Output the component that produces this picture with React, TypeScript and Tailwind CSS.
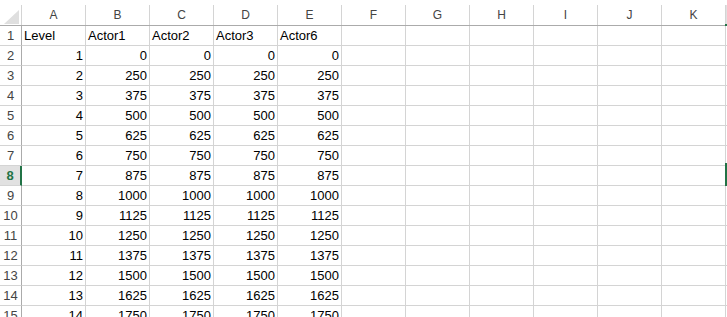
const COLS = ["A", "B", "C", "D", "E", "F", "G", "H", "I", "J", "K"];
const ACTIVE_ROW = 8;

type Cell = { text: string; num?: boolean };

function buildRows(): Cell[][] {
  const rows: Cell[][] = [
    [{ text: "Level" }, { text: "Actor1" }, { text: "Actor2" }, { text: "Actor3" }, { text: "Actor6" }],
  ];
  for (let level = 1; level <= 14; level++) {
    const v = level === 1 ? 0 : level * 125;
    rows.push([
      { text: String(level), num: true },
      ...[0, 1, 2, 3].map(() => ({ text: String(v), num: true })),
    ]);
  }
  return rows;
}

const ROWS = buildRows();

export default function App() {
  return (
    <div className="relative w-[727px] h-[317px] overflow-hidden bg-white font-['Liberation_Sans',Arial,sans-serif] text-[13px] text-black">
      <div className="grid grid-cols-[22px_repeat(11,64px)_1fr]">
        {/* corner */}
        <div className="h-[26px] pt-[5px] border-b border-[#ababab]">
          <div className="h-full border-r border-[#d4d4d4] flex items-end justify-end pr-[2px] pb-[1px]">
            <svg width="15" height="14" viewBox="0 0 15 14">
              <polygon points="15,0 15,14 0,14" fill="#dfdfdf" />
            </svg>
          </div>
        </div>
        {COLS.map((c) => (
          <div key={c} className="h-[26px] pt-[5px] border-b border-[#ababab]">
            <div className="h-full border-r border-[#d4d4d4] flex items-center justify-center text-[#444] text-[12px]">
              {c}
            </div>
          </div>
        ))}
        <div className="h-[26px] pt-[5px] border-b border-[#ababab] bg-white">
          <div className="h-full bg-[#e1e1e1]" />
        </div>

        {ROWS.map((row, i) => {
          const n = i + 1;
          const active = n === ACTIVE_ROW;
          return (
            <div key={n} className="contents">
              <div
                className={
                  active
                    ? "h-[20px] leading-[20px] text-center border-b border-[#d4d4d4] border-r-2 border-r-[#217346] bg-[#e1e1e1] text-[#217346] font-bold"
                    : "h-[20px] leading-[20px] text-center border-b border-[#d4d4d4] border-r border-r-[#ababab] text-[#444]"
                }
              >
                {n}
              </div>
              {COLS.map((c, j) => {
                const cell = row[j];
                return (
                  <div
                    key={c}
                    className={`h-[20px] leading-[20px] border-b border-r border-[#d4d4d4] whitespace-nowrap overflow-hidden ${
                      cell?.num ? "text-right pr-[2px]" : "pl-[2px]"
                    }`}
                  >
                    {cell?.text ?? ""}
                  </div>
                );
              })}
              <div className="h-[20px] border-b border-[#d4d4d4]" />
            </div>
          );
        })}
      </div>

      {/* active cell L8 edge and column marker */}
      <div className="absolute left-[725px] top-[163px] w-[2px] h-[23px] bg-[#217346]" />
      <div className="absolute left-[725px] top-[24px] w-[2px] h-[2px] bg-[#217346]" />
    </div>
  );
}
